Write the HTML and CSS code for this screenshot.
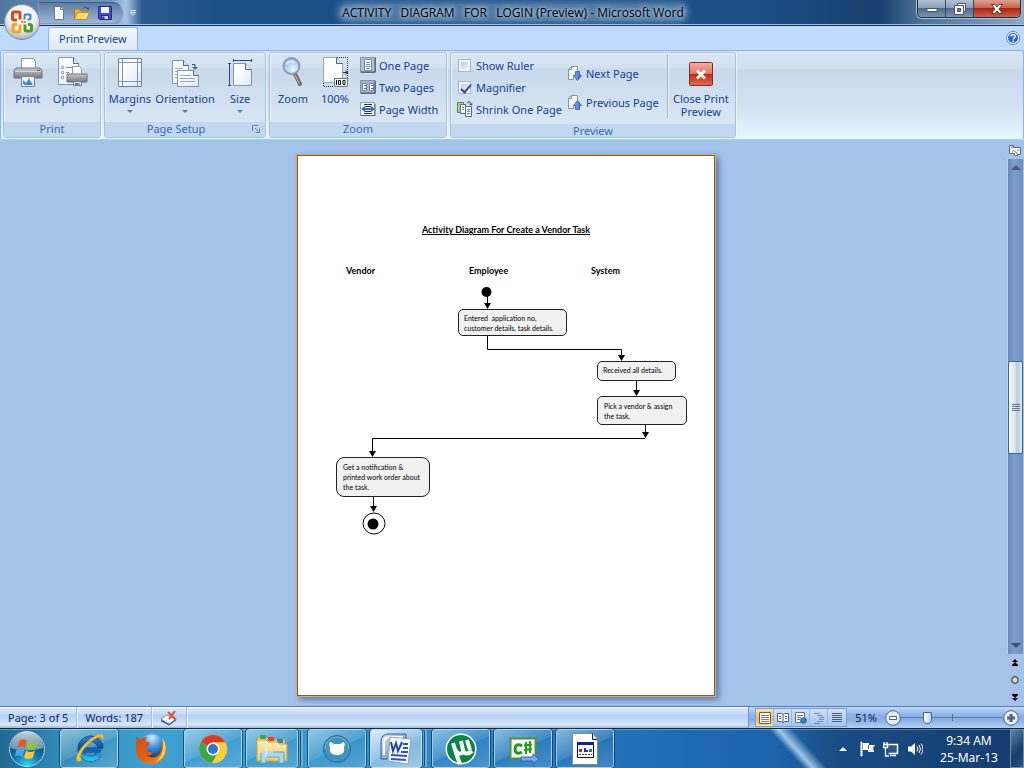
FILE: index.html
```html
<!DOCTYPE html>
<html lang="en">
<head>
<meta charset="utf-8">
<title>ACTIVITY DIAGRAM FOR LOGIN (Preview) - Microsoft Word</title>
<link rel="stylesheet" href="styles.css">
</head>
<body>
<svg class="defs" width="0" height="0" aria-hidden="true">
  <defs>
    <linearGradient id="sheet" x1="0" y1="0" x2="1" y2="1"><stop offset="0.3" stop-color="#fff"/><stop offset="1" stop-color="#dfe6f0"/></linearGradient>
    <linearGradient id="metal" x1="0" y1="0" x2="0" y2="1"><stop offset="0" stop-color="#c8c8ca"/><stop offset="0.5" stop-color="#a0a0a4"/><stop offset="1" stop-color="#77777d"/></linearGradient>
    <linearGradient id="blueArrow" x1="0" y1="0" x2="1" y2="0"><stop offset="0" stop-color="#8fbcf5"/><stop offset="1" stop-color="#2b5fc4"/></linearGradient>
    <radialGradient id="lens" cx="0.6" cy="0.7" r="0.7"><stop offset="0" stop-color="#e9f6ff"/><stop offset="1" stop-color="#8db9e6"/></radialGradient>
    <radialGradient id="orbFill" cx="0.5" cy="0.35" r="0.65"><stop offset="0" stop-color="#fff"/><stop offset="0.6" stop-color="#eceff4"/><stop offset="1" stop-color="#a9b3c3"/></radialGradient>
    <radialGradient id="startFill" cx="0.5" cy="1" r="0.9"><stop offset="0" stop-color="#2fe0ff"/><stop offset="0.45" stop-color="#1377a8"/><stop offset="1" stop-color="#123a5c"/></radialGradient>
    <linearGradient id="startGloss" x1="0" y1="0" x2="0" y2="1"><stop offset="0" stop-color="#fff" stop-opacity="0.75"/><stop offset="1" stop-color="#fff" stop-opacity="0.35"/></linearGradient>
    <linearGradient id="ieBlue" x1="0" y1="0" x2="0" y2="1"><stop offset="0" stop-color="#2a78c4"/><stop offset="0.5" stop-color="#0c4a9a"/><stop offset="1" stop-color="#29c0f4"/></linearGradient>
    <radialGradient id="globe" cx="0.5" cy="0.15" r="0.8"><stop offset="0" stop-color="#d2f0ff"/><stop offset="0.45" stop-color="#4596dc"/><stop offset="1" stop-color="#10306e"/></radialGradient>
    <linearGradient id="fox" x1="0" y1="0" x2="0.8" y2="1"><stop offset="0" stop-color="#c9501a"/><stop offset="0.6" stop-color="#e4600f"/><stop offset="1" stop-color="#f58a1c"/></linearGradient>
    <linearGradient id="folder" x1="0" y1="0" x2="0" y2="1"><stop offset="0" stop-color="#fff3bd"/><stop offset="1" stop-color="#ecc866"/></linearGradient>
    <linearGradient id="wordBlue" x1="0" y1="0" x2="1" y2="1"><stop offset="0" stop-color="#dfe9f8"/><stop offset="1" stop-color="#4a74bd"/></linearGradient>
    <linearGradient id="closeRed" x1="0" y1="0" x2="0" y2="1"><stop offset="0" stop-color="#f3b0a3"/><stop offset="0.5" stop-color="#dd7565"/><stop offset="0.52" stop-color="#c42b14"/><stop offset="1" stop-color="#d9705b"/></linearGradient>
    <g id="pageArrow"><path d="M1.500 14.500V4.500l3-3h6v10h-4v3z" fill="url(#sheet)" stroke="#8293ac"/><path d="M1.500 4.500h3v-3" fill="none" stroke="#8293ac"/></g>
  </defs>
</svg>
<div class="desktop">
  <header class="titlebar">
    <div class="quick">
      <button type="button" aria-label="New"><svg width="16" height="16" viewBox="0 0 16 16"><path d="M3.500 1.500h6l3 3v10h-9z" fill="#fff" stroke="#66768e"/><path d="M9.500 1.500v3h3" fill="#d5deea" stroke="#66768e"/></svg></button>
      <button type="button" aria-label="Open"><svg width="18" height="16" viewBox="0 0 18 16"><path d="M1.500 14V4h5l1 2h6v8z" fill="#e7b449" stroke="#a97a1d"/><path d="M1.500 14.500l3-7h12l-3 7z" fill="#fbdc7c" stroke="#b98a26"/><path d="M10 4c1-2.500 4-2.500 5 0M13.500 3.500l2 1 .500-2" fill="none" stroke="#354a78"/></svg></button>
      <button type="button" aria-label="Save"><svg width="16" height="16" viewBox="0 0 16 16"><path d="M1.500 1.500h13v13h-12l-1-1z" fill="#4a4ad0" stroke="#27278c"/><path d="M4 2h8v6H4z" fill="#eef2fb"/><path d="M4.500 10.500h7v4h-7z" fill="#d0d4e0" stroke="#26267e"/><path d="M5.500 11.500h2v3h-2z" fill="#26267e"/></svg></button>
    </div>
    <button type="button" class="quick-more" aria-label="Customize toolbar"><svg width="8" height="8" viewBox="0 0 8 8"><path d="M1 1.500h6" stroke="#dce8f8"/><path d="M1.500 3.500h5L4 6.500z" fill="none" stroke="#dce8f8"/></svg></button>
    <h1 class="title"><span>ACTIVITY   DIAGRAM   FOR   LOGIN (Preview) - Microsoft Word</span></h1>
    <div class="window-controls">
      <button type="button" aria-label="Minimize"><svg width="14" height="12" viewBox="0 0 14 12"><path d="M2 5.500h10v3H2z" fill="#fff" stroke="#4b5668"/></svg></button>
      <button type="button" aria-label="Restore"><svg width="14" height="12" viewBox="0 0 14 12"><path d="M4.500.500h8v8h-2v-6h-6z" fill="#fff" stroke="#4b5668"/><path d="M1.500 2.500h9v9h-9z" fill="#fff" stroke="#4b5668"/><path d="M4.500 5.500h3v3h-3z" fill="#6d7f98" stroke="#4b5668"/></svg></button>
      <button type="button" class="close" aria-label="Close"><svg width="14" height="12" viewBox="0 0 14 12"><path d="M1.500 1.500h3.500l2 2.500 2-2.500h3.500L9 6l3.500 4.500H9L7 8l-2 2.500H1.500L5 6z" fill="#fff" stroke="#5a3a40"/></svg></button>
    </div>
    <button type="button" class="orb" aria-label="Office Button"><svg width="38" height="38" viewBox="0 0 38 38"><circle cx="19" cy="19" r="17.500" fill="url(#orbFill)" stroke="#7f8da3"/><g fill="none" stroke-linejoin="round"><path d="M17 16.500v-6q0-1.500-1.500-1.500H11q-1.500 0-1.500 1.500v5q0 1.500 1.500 1.500h3" stroke="#d8470f" stroke-width="3"/><path d="M14 21.500h-2.500q-1.500 0-1.500 1.500v4.500q0 1.500 1.500 1.500h4q1.500 0 1.500-1.500v-6" stroke="#f4a91c" stroke-width="3"/><path d="M22 21.500v5q0 1.500 1.500 1.500H27q1.500 0 1.500-1.500V23q0-1.500-1.500-1.500h-2" stroke="#4f9a28" stroke-width="3"/><path d="M21.500 16.500v-4q0-1 1-1h4q1 0 1 1v3q0 1-1 1h-2" stroke="#3a82d8" stroke-width="2"/><path d="M18 19h5M19.500 17.500v3" stroke="#e8902a" stroke-width="2" stroke-dasharray="2 1"/></g></svg></button>
  </header>

  <nav class="tabs">
    <a href="#ribbon" class="tab">Print Preview</a>
    <button type="button" class="help" aria-label="Help"><svg width="14" height="14" viewBox="0 0 14 14"><circle cx="7" cy="7" r="6.500" fill="#fff" stroke="#5d82b8"/><circle cx="7" cy="7" r="5" fill="#2a63d8"/><path d="M5 5.500C5 3 9.200 3 9.200 5.500 9.200 7 7.200 6.800 7.200 8.500M7.200 9.500V11" fill="none" stroke="#fff" stroke-width="1.500"/></svg></button>
  </nav>

  <section class="ribbon" id="ribbon">
    <div class="group group-print">
      <div class="tools">
        <button type="button" class="big"><svg width="32" height="32" viewBox="0 0 32 32"><path d="M9.500 2.500h12l2 2v9h-14z" fill="#fff" stroke="#8b97ab"/><path d="M4 12h24l2 3v7H2v-7z" fill="url(#metal)" stroke="#6e7078"/><path d="M3 15.500h26" stroke="#d9d9db"/><path d="M25 14.500h3" stroke="#555"/><path d="M9.500 20.500h13v10h-13z" fill="#e9f1fb" stroke="#777f90"/><path d="M11 28v-4l3 3 3-4 4 6h-8z" fill="#3e86d2"/><circle cx="17" cy="23" r="1" fill="#e58b3c"/></svg><span>Print</span></button>
        <button type="button" class="big"><svg width="32" height="32" viewBox="0 0 32 32"><path d="M1.500 1.500h15l5 6v21h-20z" fill="url(#sheet)" stroke="#8293ac"/><path d="M16.500 1.500v6h5" fill="#dce5f1" stroke="#52627c"/><g fill="none" stroke="#7d8694"><circle cx="5.500" cy="11.500" r="1.300"/><circle cx="5.500" cy="16.500" r="1.300"/><circle cx="5.500" cy="21.500" r="1.300"/><path d="M9 11.500h6M9 16.500h3"/></g><path d="M15.500 10.500h7l2 2v7h-9z" fill="#fff" stroke="#8b97ab"/><path d="M10 18h20v8H10z" fill="url(#metal)" stroke="#6e7078"/><path d="M16.500 25.500h8v4h-8z" fill="#cfe1f6" stroke="#777f90"/><path d="M18 28h3" stroke="#3e86d2" stroke-width="2"/><path d="M21 28h2" stroke="#e58b3c" stroke-width="2"/></svg><span>Options</span></button>
      </div>
      <h2>Print</h2>
    </div>

    <div class="group group-setup">
      <div class="tools">
        <button type="button" class="big"><svg width="32" height="32" viewBox="0 0 32 32"><path d="M4.500 2.500h23v28h-23z" fill="url(#sheet)" stroke="#7182a0"/><path d="M8.500 3v27M23.500 3v27M5 6.500h22M5 25.500h22" stroke="#7d93b8"/></svg><span>Margins</span><i class="arrow"></i></button>
        <button type="button" class="big wide"><svg width="32" height="32" viewBox="0 0 32 32"><path d="M3.500 4.500h11l5 5v18h-16z" fill="url(#sheet)" stroke="#8293ac"/><path d="M14.500 4.500v5h5" fill="#dce5f1" stroke="#52627c"/><path d="M6 12.500h8M6 15.500h4M6 18.500h3M6 21.500h3" stroke="#8fa4cb"/><path d="M8.500 14.500h16l5 5v11h-21z" fill="url(#sheet)" stroke="#8293ac"/><path d="M24.500 14.500v5h5" fill="#dce5f1" stroke="#52627c"/><path d="M11 19.500h11M11 22.500h15M11 25.500h15" stroke="#8fa4cb"/><path d="M23 8.500h3v4M24 11.500h4l-2 2z" fill="none" stroke="#324f86"/></svg><span>Orientation</span><i class="arrow"></i></button>
        <button type="button" class="big"><svg width="32" height="32" viewBox="0 0 32 32"><path d="M9.500 7.500h12l6 6v16h-18z" fill="url(#sheet)" stroke="#8293ac"/><path d="M21.500 7.500v6h6" fill="#dce5f1" stroke="#52627c"/><path d="M9 4.500h18M9.500 3v3M27.500 3v3M5.500 7v23M4 7.500h3M4 29.500h3" stroke="#33438f"/></svg><span>Size</span><i class="arrow"></i></button>
      </div>
      <h2>Page Setup</h2>
      <button type="button" class="launcher" aria-label="Page Setup dialog"><svg width="8" height="8" viewBox="0 0 8 8"><path d="M.500 6V.500H6M3 3l3 3M7.500 3.500v4h-4" fill="none" stroke="#5b7fae"/></svg></button>
    </div>

    <div class="group group-zoom">
      <div class="tools">
        <button type="button" class="big"><svg width="32" height="32" viewBox="0 0 32 32"><path d="M18 18l5 10" stroke="#7d6c66" stroke-width="4" stroke-linecap="round"/><path d="M18 19l4 8" stroke="#c9bdb8" stroke-width="1"/><circle cx="14.500" cy="10" r="8" fill="url(#lens)" stroke="#8c9cb3" stroke-width="2"/><path d="M8 9c1-5 8-6 11-2-4-1-7 0-11 2z" fill="#fff" opacity="0.600"/></svg><span>Zoom</span></button>
        <button type="button" class="big narrow"><svg width="32" height="32" viewBox="0 0 32 32"><path d="M4.500 1.500h13l6 6v19h-19z" fill="#fff" stroke="#9aa6b8"/><path d="M17.500 1.500v6h6" fill="#dce5f1" stroke="#52627c"/><path d="M18 1.500h10.500V22M4.500 27v3.500H15" fill="none" stroke="#28344e" stroke-dasharray="1 1"/><path d="M24 16.500h5M26.500 14.500l2 2-2 2" fill="none" stroke="#28344e"/><path d="M15.500 22.500h13v8h-13z" fill="#fff" stroke="#6c7686"/><path d="M17.500 24v5M19.500 24.500h2v4h-2zM24 24.500h2v4h-2z" fill="none" stroke="#111"/></svg><span>100%</span></button>
        <div class="stack">
          <button type="button" class="small"><svg width="16" height="16" viewBox="0 0 16 16"><path d="M.500.500h15v15H.500z" fill="#b2c1d8" stroke="#8292ac"/><path d="M1 15h14V1" fill="none" stroke="#3d4d6b"/><path d="M4.500 2.500h7v11h-7z" fill="#fff" stroke="#7b8ca6"/><path d="M6 5.500h4M6 7.500h4M6 9.500h4M6 11.500h4" stroke="#7288b4"/></svg><span>One Page</span></button>
          <button type="button" class="small"><svg width="16" height="16" viewBox="0 0 16 16"><path d="M.500 1.500h15v13H.500z" fill="#a7b7cf" stroke="#8292ac"/><path d="M1 14h14V2" fill="none" stroke="#3d4d6b"/><path d="M2.500 4.500h4v7h-4zM9.500 4.500h4v7h-4z" fill="#fff" stroke="#73829b"/><path d="M4 6.500h2M4 9.500h2M11 6.500h2M11 9.500h2" stroke="#43619b"/></svg><span>Two Pages</span></button>
          <button type="button" class="small"><svg width="16" height="16" viewBox="0 0 16 16"><path d="M.500 1.500h14v13H.500z" fill="#eef2f8" stroke="#8e9db5"/><path d="M4 3.500h8M5 5.500h6M5 10.500h6M4 12.500h8" stroke="#27334e"/><path d="M5 5L1 8l4 3V9h6v2l4-3-4-3v2H5z" fill="#3664c6"/><path d="M1 14.500h14V3" fill="none" stroke="#55647f"/></svg><span>Page Width</span></button>
        </div>
      </div>
      <h2>Zoom</h2>
    </div>

    <div class="group group-preview">
      <div class="tools">
        <div class="stack">
          <label class="small"><input type="checkbox"><span>Show Ruler</span></label>
          <label class="small"><input type="checkbox" checked><span>Magnifier</span></label>
          <button type="button" class="small"><svg width="16" height="16" viewBox="0 0 16 16"><path d="M.500 1.500h6v10h-6z" fill="#a9cf9c" stroke="#4d8a3d"/><path d="M3.500 3.500h5v9h-5z" fill="#fff" stroke="#5d6c86"/><path d="M8.500 5.500h6v10h-6z" fill="#fff" stroke="#5d6c86"/><path d="M10 8.500h3M10 10.500h3M10 12.500h3M5 6.500h2M5 8.500h2" stroke="#5f7db8"/><path d="M10 2c2-2 4-1 4 1M12.500 3l1.500 1 1.500-1" fill="none" stroke="#26344f"/></svg><span>Shrink One Page</span></button>
        </div>
        <div class="stack pair">
          <button type="button" class="small"><svg width="16" height="16" viewBox="0 0 16 16"><use href="#pageArrow"/><path d="M8.500 6.500h4v4h2l-4 5-4-5h2z" fill="url(#blueArrow)" stroke="#4a6cb4"/></svg><span>Next Page</span></button>
          <button type="button" class="small"><svg width="16" height="16" viewBox="0 0 16 16"><use href="#pageArrow"/><path d="M8.500 15.500h4v-4h2l-4-5-4 5h2z" fill="url(#blueArrow)" stroke="#4a6cb4"/></svg><span>Previous Page</span></button>
        </div>
        <button type="button" class="big close-preview"><svg width="32" height="32" viewBox="0 0 32 32"><rect x="4.500" y="6.500" width="23" height="23" rx="1" fill="url(#closeRed)" stroke="#8a2a1c"/><path d="M12 14.500l8 8M20 14.500l-8 8" stroke="#fff" stroke-width="3"/></svg><span>Close Print<br>Preview</span></button>
      </div>
      <h2>Preview</h2>
    </div>
  </section>

  <main class="workspace">
    <div class="viewport">
      <article class="page">
        <svg class="edges" viewBox="297 155 418 541" aria-hidden="true">
          <g fill="none" stroke="#000">
            <path d="M487.500 296v8M487.500 336v13.500H621.500v6M636.500 381v11M645.500 425v8M645 438.500H372.500V452M373.500 497v10"/>
            <ellipse cx="374" cy="523.500" rx="11" ry="10.500"/>
          </g>
          <circle cx="486.500" cy="292" r="5"/>
          <circle cx="373" cy="524" r="5.500"/>
          <path d="M484 303h7l-3.500 6zM618 355h7l-3.500 6zM633 390h7l-3.500 6zM642 432h7l-3.500 6zM369 451h7l-3.500 6zM370 506h7l-3.500 6z"/>
        </svg>
        <h2 class="doc-title">Activity Diagram For Create a Vendor Task</h2>
        <strong class="lane lane-vendor">Vendor</strong>
        <strong class="lane lane-employee">Employee</strong>
        <strong class="lane lane-system">System</strong>
        <div class="node node-enter">Entered&nbsp; application no,<br>customer details, task details.</div>
        <div class="node node-receive">Received all details.</div>
        <div class="node node-pick">Pick a vendor &amp; assign<br>the task.</div>
        <div class="node node-notify">Get a notification &amp;<br>printed work order about<br>the task.</div>
      </article>
    </div>
    <aside class="scroll">
      <button type="button" class="ruler-toggle" aria-label="View Ruler"><svg width="12" height="12" viewBox="0 0 12 12"><path d="M.500 1.500h4v2h7v7h-3v1h-3v-2h-5z" fill="#fff" stroke="#5a6780"/><path d="M2 4l3-2M4 6l5 4M8 6h2M3 8h1" stroke="#5a6780"/></svg></button>
      <div class="track">
        <button type="button" aria-label="Scroll up"><svg width="10" height="6" viewBox="0 0 10 6"><path d="M0 5l5-5 5 5z" fill="#4b5a85"/></svg></button>
        <div class="thumb"><i></i></div>
        <button type="button" aria-label="Scroll down"><svg width="10" height="6" viewBox="0 0 10 6"><path d="M0 0h10L5 5z" fill="#3c4a80"/></svg></button>
      </div>
      <div class="browse">
        <button type="button" aria-label="Previous"><svg width="8" height="8" viewBox="0 0 8 8"><path d="M4 0l3 3H1zM4 3l3 3H1zM1 6h6v1H1z"/></svg></button>
        <button type="button" aria-label="Select browse object"><svg width="8" height="8" viewBox="0 0 8 8"><circle cx="4" cy="4" r="3.300" fill="#d9d6d0" stroke="#222"/></svg></button>
        <button type="button" aria-label="Next"><svg width="8" height="8" viewBox="0 0 8 8"><path d="M4 8l3-3H1zM4 5l3-3H1zM1 1h6v1H1z"/></svg></button>
      </div>
    </aside>
  </main>

  <footer class="status">
    <button type="button" class="cell">Page: 3 of 5</button>
    <button type="button" class="cell">Words: 187</button>
    <button type="button" class="cell" aria-label="Proofing errors"><svg width="18" height="16" viewBox="0 0 18 16"><path d="M1 9l6-4 9 4-7 5z" fill="#fff" stroke="#7f91b5"/><path d="M1 9.500v2l8 4 7-5V9l-7 5z" fill="#3e62b4"/><path d="M8 2l8 8M15 1L9 9" stroke="#ee4a2d" stroke-width="2"/></svg></button>
    <div class="status-right">
      <div class="views">
        <button type="button" class="on" aria-label="Print Layout"><svg width="12" height="12" viewBox="0 0 12 12"><path d="M.500.500h11v11H.500z" fill="#fff" stroke="#6b5c45"/><path d="M2 3.500h8M2 5.500h8M2 7.500h8M2 9.500h8" stroke="#8b7c65"/></svg></button>
        <button type="button" aria-label="Full Screen Reading"><svg width="12" height="12" viewBox="0 0 12 12"><path d="M.500 1.500h4l1.500 1 1.500-1h4v8h-4l-1.500 1.500-1.500-1.500h-4zM6 3v7" fill="#fff" stroke="#4d5c78"/><path d="M2 4.500h2M2 6.500h2M8 4.500h2M8 6.500h2" stroke="#4d5c78"/></svg></button>
        <button type="button" aria-label="Web Layout"><svg width="12" height="12" viewBox="0 0 12 12"><path d="M.500.500h9v10h-9z" fill="#fff" stroke="#5f6d86"/><path d="M2 3.500h6M2 5.500h4M2 7.500h3" stroke="#5f6d86"/><circle cx="8.500" cy="8.500" r="3.300" fill="#2f74b8"/><path d="M7 7l2 1-1 2z" fill="#63b84c"/></svg></button>
        <button type="button" aria-label="Outline"><svg width="12" height="12" viewBox="0 0 12 12"><path d="M1 1.500h6M4 3.500h6M6 5.500h5M6 7.500h5M4 9.500h6M1 11.500h6" stroke="#7c8ba5"/></svg></button>
        <button type="button" aria-label="Draft"><svg width="12" height="12" viewBox="0 0 12 12"><path d="M1 1.500h10M1 3.500h10M1 5.500h10M1 7.500h10M1 9.500h10" stroke="#4f5f7a"/></svg></button>
      </div>
      <button type="button" class="percent">51%</button>
      <button type="button" class="round" aria-label="Zoom out"><svg width="16" height="16" viewBox="0 0 16 16"><circle cx="8" cy="8" r="7.300" fill="#e6eefb" stroke="#52627f"/><path d="M4.500 6.500h7v3h-7z" fill="#fff" stroke="#52627f"/></svg></button>
      <input type="range" class="zoom-range" aria-label="Zoom" min="0" max="100" value="24">
      <button type="button" class="round" aria-label="Zoom in"><svg width="16" height="16" viewBox="0 0 16 16"><circle cx="8" cy="8" r="7.300" fill="#e6eefb" stroke="#52627f"/><path d="M8 4v8M4 8h8" stroke="#52627f" stroke-width="3"/></svg></button>
    </div>
  </footer>

  <nav class="taskbar">
    <button type="button" class="start" aria-label="Start"><svg width="38" height="38" viewBox="0 0 38 38"><circle cx="19" cy="19" r="17.500" fill="url(#startFill)" stroke="#a4d4ea"/><path d="M2.500 18a16.500 16.500 0 0 1 33 0c-10 3-23 3-33 0z" fill="url(#startGloss)"/><path d="M11 11c3-2 5-2 8 0l-2 7c-3-2-5-2-8 0z" fill="#e5562b"/><path d="M20.500 11.500c3 2 6 2 9 0l-2 7c-3 2-6 2-9 0z" fill="#8cc63f"/><path d="M8.500 20c3-2 5-2 8 0l-2 7c-3-2-5-2-8 0z" fill="#49a6e8"/><path d="M18 20.500c3 2 6 2 9 0l-2 7c-3 2-6 2-9 0z" fill="#fcc52c"/></svg></button>
    <div class="apps">
      <button type="button" class="app" aria-label="Internet Explorer"><svg width="32" height="32" viewBox="0 0 32 32"><path d="M26 21a10 10 0 1 1 1.500-6" fill="none" stroke="#0d3b7c" stroke-width="6"/><path d="M10 17h18" stroke="#0d3b7c" stroke-width="5"/><path d="M26 21a10 10 0 1 1 1.500-5" fill="none" stroke="url(#ieBlue)" stroke-width="5"/><path d="M10 17h18" stroke="#1562b0" stroke-width="4"/><path d="M9 27c-6 4-8-1-2-10C13 8 27-2 30 2c1 2 0 4-1 5 0-4-2-4-7-1C13 11 4 23 9 27z" fill="#f6c330" stroke="#d39a16" stroke-width="0.500"/></svg></button>
      <button type="button" class="app bare" aria-label="Firefox"><svg width="32" height="32" viewBox="0 0 32 32"><circle cx="17" cy="14" r="13" fill="url(#globe)"/><path d="M2 3c1 2 2 3 4 3 2-1 4-2 6-2-1 2-2 3-1 5 2 0 4 0 4 2-1 2-3 2-4 4 0 3 3 5 7 4-1 3-4 4-7 3 5 4 12 3 15-3 1-3 1-6 0-9 2 1 2 2 3 4 0-3 0-6-2-8 4 4 5 9 4 13-1 7-8 12-15 12C7 31 0 25 1 14c0-4 0-8 1-11z" fill="url(#fox)"/><path d="M27 5c6 6 5 20-6 24 4-4 7-9 7-16 0-3 0-5-1-8z" fill="#fbd04c"/></svg></button>
      <button type="button" class="app" aria-label="Chrome"><svg width="32" height="32" viewBox="0 0 32 32"><circle cx="16" cy="16" r="14" fill="#f4c62b"/><path d="M16 16L3.900 9A14 14 0 0 1 28.500 9.500H16z" fill="#da3b2b"/><path d="M16 16L3.900 9A14 14 0 0 0 15 30l5-9z" fill="#3fa447"/><path d="M16 9.500h12.500A14 14 0 0 1 15 30l6.500-10.500z" fill="#f9cf37"/><circle cx="16" cy="16" r="6.500" fill="#fff"/><circle cx="16" cy="16" r="5" fill="#3973c6"/></svg></button>
      <button type="button" class="app stacked" aria-label="Explorer"><svg width="32" height="32" viewBox="0 0 32 32"><path d="M1 4h10l2 2h16v22H1z" fill="#e9c96e" stroke="#b6923c"/><path d="M4 2h6v4H4z" fill="#35a854"/><path d="M12 4h6v4h-6z" fill="#d84a33"/><path d="M21 6h6v4h-6z" fill="#3183d0"/><path d="M1 7h9l2 2h10l1 2h8v17H1z" fill="url(#folder)" stroke="#c6a652"/><path d="M5 30V19h23v11h-5v-6H10v6z" fill="#a9daf0" stroke="#5ba5c8"/><path d="M10 12v14M3 19h14" stroke="#fff" opacity="0.800"/></svg></button>
      <button type="button" class="app" aria-label="GitHub"><svg width="32" height="32" viewBox="0 0 32 32"><circle cx="16" cy="16" r="13.500" fill="#4292bd" stroke="#266a96"/><path d="M4 16a12 12 0 0 1 24 0" fill="none" stroke="#78b9dc"/><path d="M9 9l4 2h6l4-2c1 2 1 4 0 5 1 6-2 8-7 8s-8-2-7-8c-1-1-1-3 0-5z" fill="#fff"/></svg></button>
      <button type="button" class="app active stacked" aria-label="Word"><svg width="32" height="32" viewBox="0 0 32 32"><path d="M1 9q0-8 8-8h17v25H1z" fill="url(#wordBlue)" stroke="#3a5c9f"/><path d="M4 22V10q0-6 6-6h13" fill="none" stroke="#fff" stroke-width="2"/><path d="M10 4l21 2-3 25-20-3z" fill="#f4f7fc" stroke="#8ba1c8"/><path d="M11 9l2 9 3-8 2 8 4-9" fill="none" stroke="#234a98" stroke-width="2"/><path d="M23 11h5M23 15h5M21 19h7M11 22l16 1M11 26l15 1" stroke="#3457a2" stroke-width="2"/></svg></button>
      <button type="button" class="app" aria-label="uTorrent"><svg width="32" height="32" viewBox="0 0 32 32"><circle cx="16" cy="16" r="15.500" fill="#fff"/><circle cx="16" cy="16" r="14" fill="#0a8446"/><path d="M8 10l4 13 3 8M10 16c2 6 8 6 8 1l-2-9M18 17c1 5 6 4 9 1M22 7l3 10" fill="none" stroke="#fff" stroke-width="4"/></svg></button>
      <button type="button" class="app" aria-label="Visual C#"><svg width="32" height="32" viewBox="0 0 32 32"><path d="M3.500 5.500h25v20h-25z" fill="#f7fbf3" stroke="#588f39" stroke-width="2"/><path d="M15 13c-5-3-7 0-7 3s2 6 7 3" fill="none" stroke="#1f9a18" stroke-width="3"/><path d="M19 9v12M23 8v12M17 12.500l8-1M17 17l8-1" stroke="#1f9a18" stroke-width="2"/><path d="M14 24h12v-3l6 5-6 5v-3H14z" fill="#79a9f2" stroke="#3962b5"/></svg></button>
      <button type="button" class="app" aria-label="Application"><svg width="32" height="32" viewBox="0 0 32 32"><path d="M3.500.500h20l5 6v25h-25z" fill="#fff" stroke="#8a8578"/><path d="M23.500.500v6h5" fill="#ddd" stroke="#222"/><path d="M8.500 9.500h16v15h-16z" fill="#fff" stroke="#111"/><path d="M8 9h17v3H8z" fill="#142090"/><path d="M10 16h3v3h-3z" fill="#d02020"/><path d="M15 15h2v4h-2zM17 17h2v2h-2z" fill="#2030c0"/><path d="M20 16h3v3h-3z" fill="#109030"/><path d="M10 21.500h13" stroke="#444" stroke-dasharray="2 1"/></svg></button>
    </div>
    <div class="tray">
      <button type="button" aria-label="Show hidden icons"><svg width="8" height="16" viewBox="0 0 8 16"><path d="M0 10l4-4 4 4z" fill="#fff"/></svg></button>
      <button type="button" aria-label="Action Center"><svg width="16" height="16" viewBox="0 0 16 16"><path d="M2 1h1v14H2z" stroke="#fff" fill="#fff"/><path d="M4 2h6v2h6l-2 3 1 4H9V9H4z" fill="#fff"/><path d="M9.500 4v4" stroke="#26588c"/></svg></button>
      <button type="button" aria-label="Network"><svg width="16" height="16" viewBox="0 0 16 16"><path d="M4.500 5V3.500h10v9h-9" fill="#2b5988" stroke="#fff" stroke-width="1.500"/><path d="M1 1v2M4 1v2M.500 3.500h4v3h-4zM2.500 7v8H6M7 14.500h6" fill="none" stroke="#fff" stroke-width="1.300"/></svg></button>
      <button type="button" aria-label="Volume"><svg width="16" height="16" viewBox="0 0 16 16"><path d="M1 5.500h3L8 2v12l-4-3.500H1z" fill="#fff"/><path d="M10 5.500q2 2.500 0 5M12 4q3 4 0 8M14 2.500q4 5.500 0 11" fill="none" stroke="#fff"/></svg></button>
      <button type="button" class="clock"><time>9:34 AM</time><span>25-Mar-13</span></button>
      <button type="button" class="show-desktop" aria-label="Show desktop"></button>
    </div>
  </nav>
</div>
</body>
</html>
```

FILE: styles.css
```css
* { box-sizing: border-box; }
body {
  margin: 0;
  font-family: "Noto Sans", "Open Sans", sans-serif;
  font-size: 11px;
  line-height: 13px;
  color: #15428b;
}
button {
  display: flex;
  align-items: center;
  justify-content: center;
  padding: 0;
  border: 0;
  background: none;
  color: inherit;
  font: inherit;
}
h1, h2 { margin: 0; font: inherit; }
svg { display: block; flex: none; }
.defs { position: absolute; }
.desktop { display: flex; flex-direction: column; height: 100vh; overflow: hidden; }

/* Title bar */
.titlebar {
  position: relative;
  z-index: 2;
  display: flex;
  align-items: center;
  flex: none;
  height: 26px;
  background: linear-gradient(90deg, #52779f 0, #6f95bd 110px, #a7c6e4 126px, #2b5b90 142px, #1a4f88 220px, #1b4f86 750px, #16406f 880px, #4c7199 920px, #8ba9c4 1024px);
  border-bottom: 1px solid #17304c;
  box-shadow: inset 0 -1px #a9c0d6;
}
.quick {
  display: flex;
  align-items: center;
  gap: 6px;
  width: 85px;
  height: 22px;
  margin-left: 38px;
  padding-left: 12px;
  border: 1px solid #8298b4;
  border-top-color: #405f88;
  border-radius: 0 11px 11px 0;
  background: linear-gradient(#5d7da3, #9cb7d4);
}
.quick-more { width: 20px; height: 20px; }
.title {
  flex: 1;
  padding: 0 34px 0 0;
  color: #000;
  font-family: "Open Sans", "Noto Sans", sans-serif;
  font-size: 12px;
  line-height: 16px;
  text-align: center;
  white-space: pre;
}
.title span {
  padding: 0 2px;
  border-radius: 8px;
  background: rgba(170, 195, 222, 0.35);
  box-shadow: 0 0 6px 3px rgba(170, 195, 222, 0.35);
  text-shadow: 0 0 6px #dbe8f6, 0 0 4px #c4d8ec;
}
.window-controls {
  display: flex;
  align-self: flex-start;
  height: 18px;
  margin-right: 3px;
  border: 1px solid #1d2d42;
  border-top: 0;
  border-radius: 0 0 5px 5px;
  overflow: hidden;
  box-shadow: 0 0 0 1px #a9bfd5;
}
.window-controls button {
  width: 28px;
  border-right: 1px solid #33475f;
  background: linear-gradient(#b3c3d3 0, #8c9fb5 45%, #50698a 50%, #7d95b0 100%);
}
.window-controls .close {
  width: 46px;
  border-right: 0;
  background: linear-gradient(#dca091 0, #cb6450 45%, #ab2412 50%, #d0604a 100%);
}
.orb { position: absolute; left: 3px; top: 3px; }

/* Tabs */
.tabs {
  display: flex;
  align-items: flex-end;
  justify-content: space-between;
  flex: none;
  height: 24px;
  padding: 0 4px 0 48px;
  background: #bfdbff;
}
.tab {
  position: relative;
  z-index: 1;
  height: 23px;
  padding: 4px 10px;
  border: 1px solid #8db2e3;
  border-bottom: 0;
  border-radius: 3px 3px 0 0;
  background: linear-gradient(#f2f7fe, #dfe8f4);
  color: inherit;
  text-decoration: none;
  white-space: nowrap;
}
.help { align-self: center; }

/* Ribbon */
.ribbon {
  display: flex;
  flex: none;
  gap: 3px;
  height: 90px;
  padding: 1px 2px;
  border: 1px solid #8db2e3;
  border-bottom-color: #9cd6ec;
  border-radius: 3px;
  background: linear-gradient(#dbe5f2 0, #d0dff0 18px, #c7d8ed 19px, #d3e3f3 65%, #e7f7ff 100%);
  box-shadow: 0 0 0 1px #bfdbff;
}
.group {
  position: relative;
  display: flex;
  flex-direction: column;
  border: 1px solid #a3c2e0;
  border-radius: 3px;
  background: linear-gradient(#dce6f3 0, #d2e0f0 15px, #c8d9ed 16px, #dde9f5 100%);
  box-shadow: inset 1px 1px rgba(255, 255, 255, 0.6), 1px 0 rgba(255, 255, 255, 0.6);
}
.group h2 {
  height: 15px;
  background: #c1d8f0;
  color: #3e6aaa;
  text-align: center;
  border-radius: 0 0 2px 2px;
}
.group-print { width: 98px; }
.group-print .tools { padding-right: 4px; }
.group-setup { width: 162px; }
.group-setup h2 { padding-right: 18px; }
.group-zoom { width: 178px; }
.group-preview { width: 286px; }
.tools { display: flex; flex: 1; padding: 1px 1px 0; }
.big {
  flex: 1 1 45px;
  flex-direction: column;
  justify-content: flex-start;
  padding-top: 2px;
  white-space: nowrap;
}
.big span { margin-top: 4px; }
.big.wide { flex-basis: 60px; }
.arrow {
  margin-top: 5px;
  border: 3px solid transparent;
  border-top-color: #5779ac;
  border-bottom: 0;
}
.stack { display: flex; flex-direction: column; padding: 0 5px 0 2px; }
.small { display: flex; align-items: center; justify-content: flex-start; gap: 3px; height: 22px; white-space: nowrap; }
.launcher { position: absolute; right: 5px; bottom: 4px; }
.group-zoom .big { flex: 0 0 42px; }
.group-zoom .tools { padding-left: 2px; }
.group-zoom .stack { padding-left: 4px; }
.group-preview .stack { padding-left: 5px; }
.group-preview .stack .small { gap: 3px; }
.small input {
  appearance: none;
  width: 13px;
  height: 13px;
  margin: 0 2px 0 1px;
  border: 1px solid #a3b4cc;
  background: linear-gradient(135deg, #b4bdc9, #fff);
  box-shadow: inset 0 0 0 2px #f0f3f8;
}
.small input:checked { position: relative; }
.small input:checked::after {
  content: "";
  position: absolute;
  left: 4px;
  top: 0;
  width: 4px;
  height: 9px;
  border: solid #3a4f82;
  border-width: 0 2px 2px 0;
  transform: rotate(40deg);
}
.group-preview .pair { gap: 7px; padding: 8px 8px 0 0; }
.close-preview { border-left: 1px solid #9db6d6; box-shadow: inset 1px 0 #edf4fc; margin-bottom: 6px; }

/* Document area */
.workspace { display: flex; flex: 1; min-height: 0; background: #a3c3ea; }
.viewport { display: flex; justify-content: center; align-items: flex-start; flex: 1; padding: 14px 0 0 5px; overflow: hidden; }
.page {
  position: relative;
  width: 420px;
  height: 543px;
  border: 1px solid #efa653;
  background: #fff;
  box-shadow: inset 0 0 0 1px #6a6258, 3px 3px 6px #5b7ba8;
  color: #000;
  font-family: Lato, "Open Sans", sans-serif;
}
.edges { position: absolute; inset: 0; width: 100%; height: 100%; }
.doc-title, .lane { position: absolute; font-size: 9px; line-height: 12px; font-weight: 700; white-space: nowrap; }
.doc-title { left: 0; right: 0; top: 69px; text-align: center; text-decoration: underline; }
.lane { top: 110px; }
.lane-vendor { left: 49px; }
.lane-employee { left: 172px; }
.lane-system { left: 294px; }
.node {
  position: absolute;
  padding: 3px 6px;
  border: 1px solid #222;
  border-radius: 5px;
  background: #f1f1f1;
  font-size: 7px;
  line-height: 10px;
  white-space: nowrap;
}
.node-enter { left: 161px; top: 154px; width: 109px; height: 27px; padding-left: 5px; }
.node-receive { left: 300px; top: 206px; width: 79px; height: 20px; padding-left: 5px; }
.node-pick { left: 300px; top: 241px; width: 90px; height: 29px; padding-top: 4px; }
.node-notify { left: 39px; top: 302px; width: 94px; height: 40px; padding-top: 4px; border-radius: 8px; }

/* Vertical scroll bar */
.scroll { display: flex; flex-direction: column; width: 17px; padding-right: 1px; }
.ruler-toggle { height: 19px; }
.track {
  display: flex;
  flex-direction: column;
  justify-content: space-between;
  flex: 1;
  border-left: 1px solid #b5d0f0;
  background: linear-gradient(90deg, #6788b4, #7d9dca 40%, #6e90c0);
}
.track button { height: 17px; }
.thumb {
  display: flex;
  align-items: center;
  justify-content: center;
  height: 93px;
  margin-top: 9px;
  margin-bottom: 7px;
  border: 1px solid #4a5f8c;
  border-radius: 2px;
  background: linear-gradient(90deg, #f7f9fc, #dde6ef 45%, #b8cadb 60%, #dce6f0);
}
.thumb i { width: 8px; height: 7px; background: repeating-linear-gradient(#6b7482 0 1px, transparent 1px 2px); }
.browse { display: flex; flex-direction: column; gap: 9px; padding: 5px 2px; }

/* Status bar */
.status {
  display: flex;
  flex: none;
  height: 22px;
  border-top: 1px solid #567db1;
  background: linear-gradient(#fff 0, #d7e6f9 2px, #c7dcf8 7px, #b3d0f5 8px, #d7e5f7 18px, #9cb5d5 100%);
  color: #15215c;
}
.cell { padding: 0 8px; border-right: 1px solid #a3bfe4; box-shadow: 1px 0 #f0f6fe; }
.status-right {
  display: flex;
  align-items: center;
  margin-left: auto;
  padding: 0 5px 0 6px;
  border-left: 1px solid #7394c2;
  background: linear-gradient(#c4daf7, #8eb6ea 35%, #86aee3 60%, #b3d0f5);
}
.views { display: flex; height: 19px; border: 1px solid #7a9cd0; }
.views button { width: 18px; border-right: 1px solid #98b9e5; background: linear-gradient(#d0e1f8, #a4c5f0); }
.views button:last-child { border-right: 0; }
.views .on { background: linear-gradient(#ffe2a2, #f9b550 60%, #fce49b); }
.percent { width: 38px; }
.zoom-range {
  appearance: none;
  width: 102px;
  height: 14px;
  margin: 0;
  background: linear-gradient(#4f6f9f, #4f6f9f) 50% 50% / 1px 7px no-repeat, linear-gradient(#5b7eb0, #5b7eb0) 0 50% / 100% 1px no-repeat;
}
.zoom-range::-webkit-slider-thumb {
  appearance: none;
  width: 9px;
  height: 12px;
  border: 1px solid #4c618a;
  border-radius: 1px 1px 5px 5px;
  background: linear-gradient(90deg, #fff, #bcd0ee);
}

/* Taskbar */
.taskbar {
  display: flex;
  flex: none;
  height: 40px;
  border-top: 1px solid #0b2742;
  background:
    linear-gradient(rgba(255, 255, 255, 0.3) 0 1px, transparent 1px),
    linear-gradient(48deg, transparent calc(100% - 190px), rgba(190, 225, 250, 0.8) calc(100% - 183px), transparent calc(100% - 172px)),
    linear-gradient(90deg, #1f6a92 0, #2f89b5 56px, #40a0d2 150px, #3a97cf 330px, #2a80c2 500px, #1d69b1 700px, #1c63aa 780px, #194d85 835px, #143c6c 1024px);
}
.start { width: 54px; }
.apps { display: flex; gap: 4px; padding-left: 6px; }
.app {
  width: 58px;
  height: 39px;
  border: 1px solid rgba(190, 228, 248, 0.75);
  border-radius: 3px;
  outline: 1px solid rgba(12, 52, 88, 0.7);
  background: linear-gradient(155deg, rgba(255, 255, 255, 0.45), rgba(255, 255, 255, 0.12) 50%, rgba(255, 255, 255, 0.02) 52%, rgba(255, 255, 255, 0.15));
}
.app.bare { border-color: transparent; outline: 0; background: none; }
.app.stacked {
  width: 52px;
  margin-right: 6px;
  box-shadow: 3px 0 0 -1px #57a6d0, 4px 0 0 -1px #184f78, 6px 0 0 -1px #69b2da;
}
.app.active { background: linear-gradient(155deg, rgba(255, 255, 255, 0.85), rgba(255, 255, 255, 0.4) 60%, rgba(255, 255, 255, 0.55)); }
.tray { display: flex; align-items: center; gap: 8px; margin-left: auto; color: #fff; font-size: 12px; }
.tray button:first-child { margin-right: 4px; }
.clock { flex-direction: column; width: 68px; margin-left: 4px; line-height: 17px; white-space: nowrap; }
.show-desktop {
  width: 14px;
  height: 39px;
  margin-left: -1px;
  border: 1px solid #6c8fb3;
  background: linear-gradient(135deg, #5b83ac, #163c68 60%, #2b5786);
}
```
